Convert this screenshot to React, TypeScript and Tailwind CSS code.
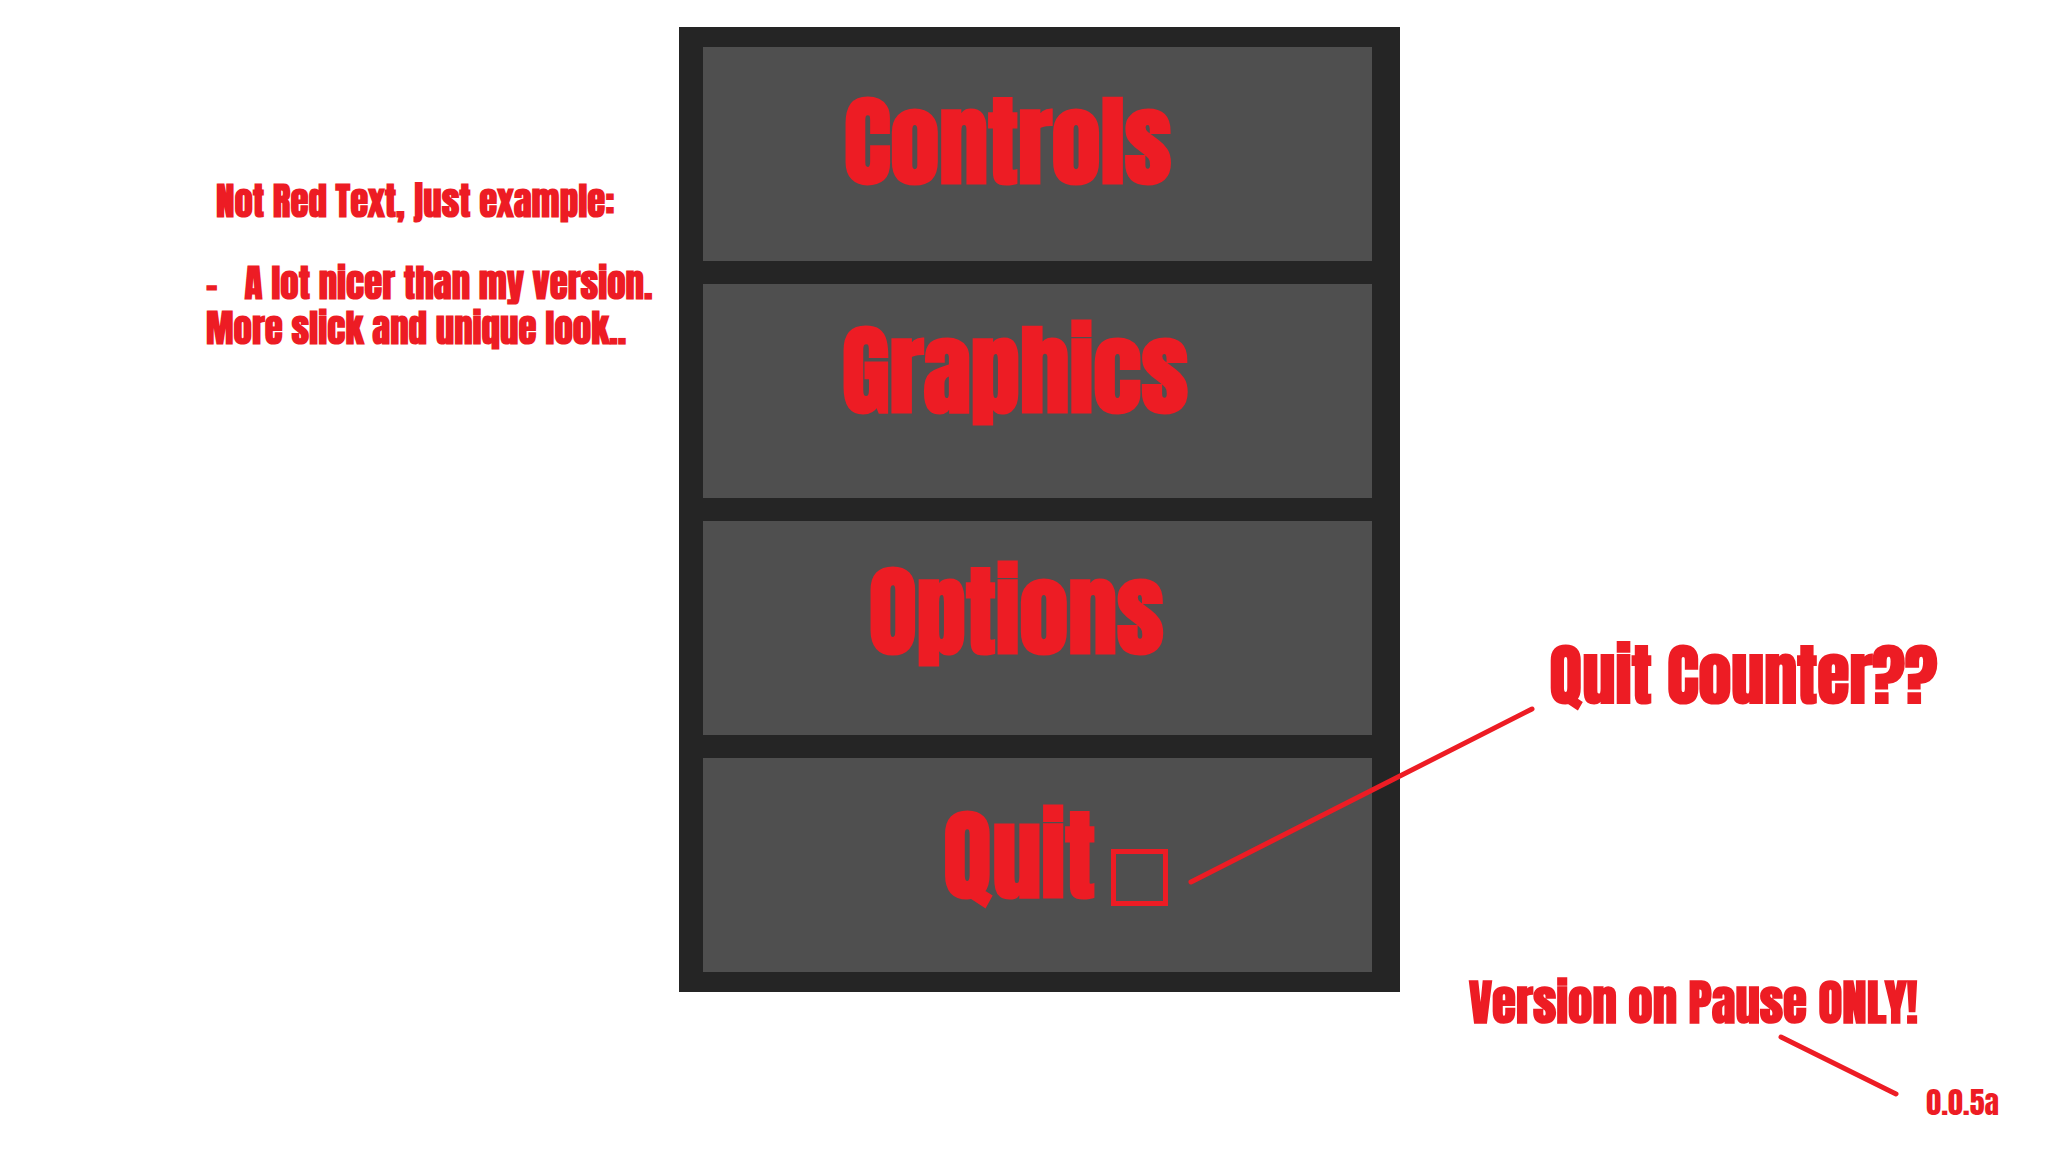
const menuItems = [
  { label: "Controls", place: "pt-[46px] pl-[141px]" },
  { label: "Graphics", place: "pt-[38px] pl-[139px]" },
  { label: "Options", place: "pt-[42px] pl-[166px]" },
];

const cardClass =
  "flex h-[214px] w-full cursor-pointer items-start bg-[#4f4f4f] text-left";

export default function App() {
  return (
    <main className="relative grid min-h-screen grid-cols-[679fr_721fr_648fr] overflow-hidden bg-white font-['Impact','Anton','Roboto_Condensed',sans-serif] font-bold whitespace-nowrap text-[#ed1c24]">
      <aside className="flex flex-col pt-[179px] pl-[206px] text-[37px] leading-[45px]">
        <p className="pl-[10px]">Not Red Text, just example:</p>
        <p className="mt-[37px] flex gap-[27px]">
          <span>-</span>
          <span>A lot nicer than my version.</span>
        </p>
        <p>More slick and unique look..</p>
      </aside>

      <nav
        aria-label="Pause menu"
        className="mt-[27px] flex flex-col gap-[23px] self-start bg-[#252525] pt-5 pr-7 pb-5 pl-6 text-[98px] leading-none"
      >
        {menuItems.map((item) => (
          <button key={item.label} type="button" className={`${cardClass} ${item.place}`}>
            {item.label}
          </button>
        ))}
        <button type="button" className={`${cardClass} gap-4 pt-[49px] pl-[241px]`}>
          Quit
          <span className="mt-[42px] size-[57px] border-5 border-[#ed1c24]" />
        </button>
      </nav>

      <aside className="flex flex-col">
        <p className="mt-[639px] pl-[150px] text-[66px] leading-[72px]">Quit Counter??</p>
        <p className="mt-[264px] pl-[69px] text-[49px] leading-[54px]">Version on Pause ONLY!</p>
        <p className="mt-[58px] mr-[49px] self-end text-[30px] leading-8 font-normal">0.0.5a</p>
      </aside>

      {/* Pointer lines from the notes to the things they describe */}
      <svg
        aria-hidden="true"
        viewBox="0 0 2048 1152"
        className="pointer-events-none absolute inset-x-0 top-0 w-full"
        stroke="#ed1c24"
        strokeWidth="5"
        strokeLinecap="round"
      >
        <path d="M1191 882 1532 709" />
        <path d="M1781 1037 1896 1094" />
      </svg>
    </main>
  );
}
